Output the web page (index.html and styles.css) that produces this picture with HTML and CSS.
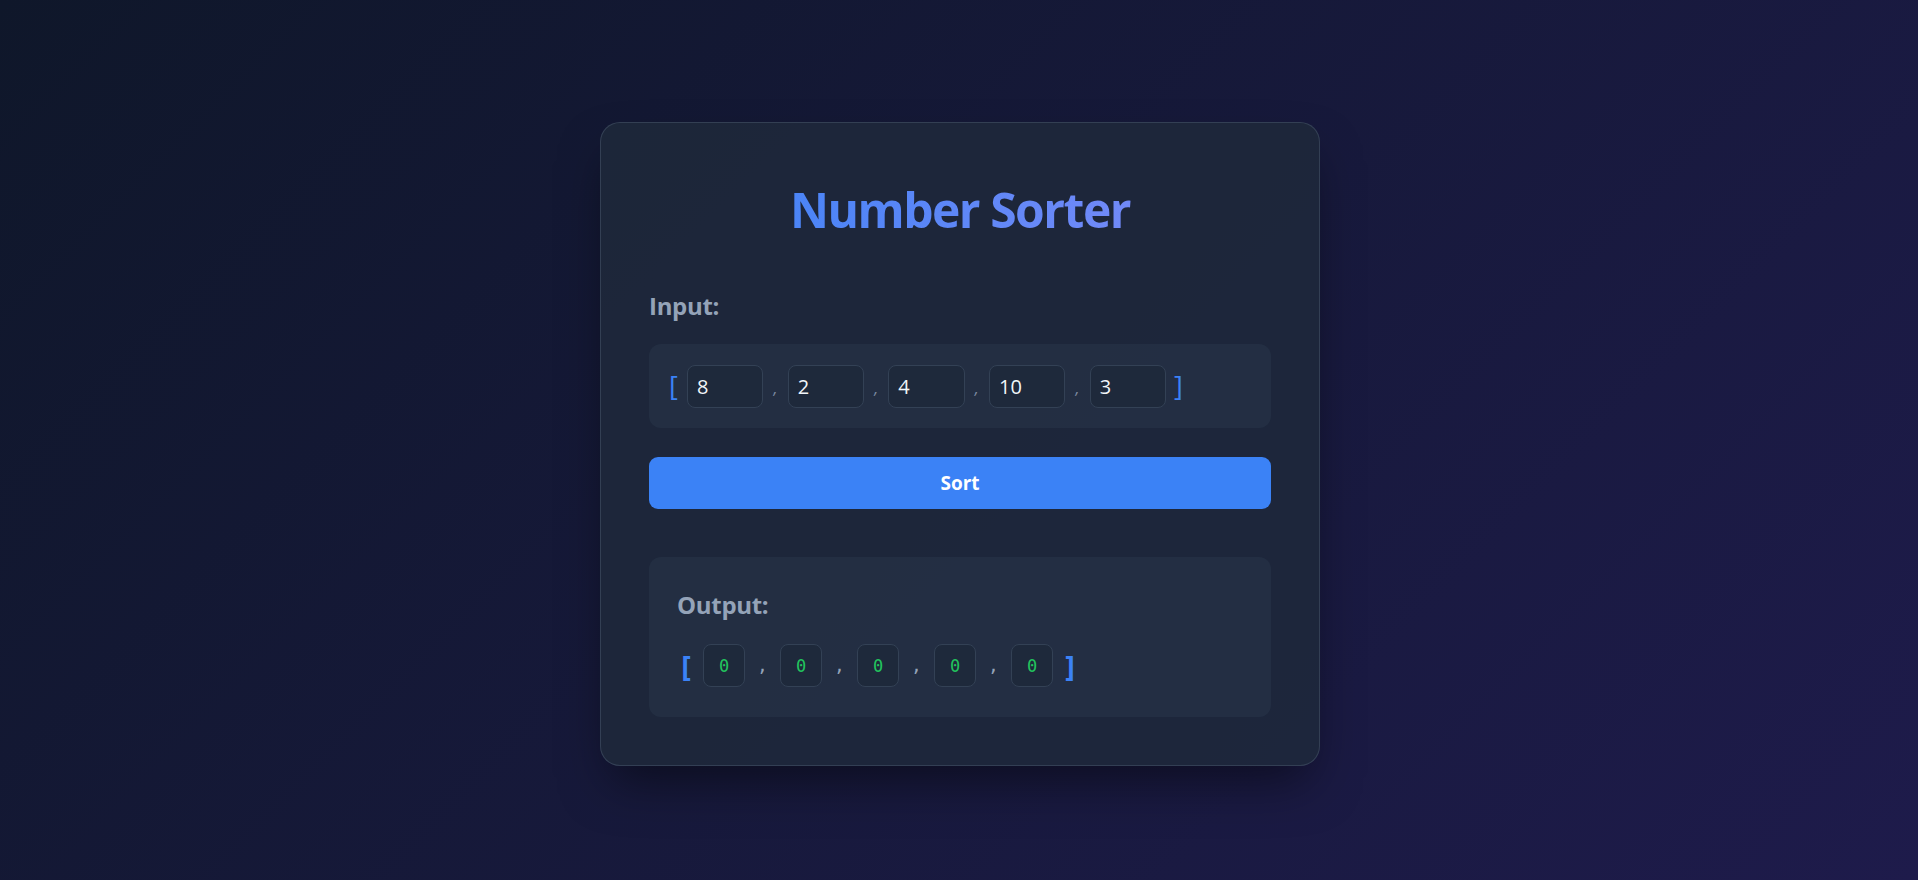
FILE: index.html
```html
<!DOCTYPE html>
<html lang="en">
<head>
<meta charset="utf-8">
<title>Number Sorter</title>
<link rel="stylesheet" href="styles.css">
</head>
<body>
  <main class="card">
    <h1 class="title">Number Sorter</h1>
    <div class="label">Input:</div>
    <div class="input-area">
      <div class="input-row">
        <span class="in-bracket">[</span>
        <input class="num-input" type="text" value="8">
        <span class="in-comma">,</span>
        <input class="num-input" type="text" value="2">
        <span class="in-comma">,</span>
        <input class="num-input" type="text" value="4">
        <span class="in-comma">,</span>
        <input class="num-input" type="text" value="10">
        <span class="in-comma">,</span>
        <input class="num-input" type="text" value="3">
        <span class="in-bracket">]</span>
      </div>
    </div>
    <button class="sort-btn" type="button">Sort</button>
    <section class="output-area">
      <div class="label out-label">Output:</div>
      <div class="output-row">
        <span class="out-bracket">[</span>
        <span class="out-box">0</span>
        <span class="out-comma">,</span>
        <span class="out-box">0</span>
        <span class="out-comma">,</span>
        <span class="out-box">0</span>
        <span class="out-comma">,</span>
        <span class="out-box">0</span>
        <span class="out-comma">,</span>
        <span class="out-box">0</span>
        <span class="out-bracket">]</span>
      </div>
    </section>
  </main>
</body>
</html>
```
FILE: styles.css
```css
* {
  box-sizing: border-box;
}

html, body {
  margin: 0;
  height: 100%;
}

body {
  min-height: 100vh;
  padding-top: 8px;
  padding-left: 2px;
  display: flex;
  justify-content: center;
  align-items: center;
  background: linear-gradient(135deg, #0f172a 0%, #1e1b4b 100%);
  font-family: "Open Sans", "Noto Sans", sans-serif;
  color: #e2e8f0;
}

.card {
  width: 720px;
  padding: 48px;
  border: 1px solid rgba(71, 85, 105, 0.55);
  border-radius: 20px;
  background: rgba(30, 41, 59, 0.85);
  box-shadow: 0 25px 50px -12px rgba(0, 0, 0, 0.5);
}

.title {
  margin: 7px 0 48px;
  font-size: 48px;
  line-height: 64px;
  font-weight: 700;
  letter-spacing: -1.5px;
  text-align: center;
  background: linear-gradient(90deg, #3b82f6, #818cf8);
  -webkit-background-clip: text;
  background-clip: text;
  color: transparent;
}

.label {
  font-size: 24px;
  line-height: 32px;
  font-weight: 700;
  letter-spacing: -0.3px;
  color: #94a3b8;
  margin-bottom: 22px;
}

.input-area {
  padding: 20px;
  border-radius: 12px;
  background: rgba(51, 65, 85, 0.3);
}

.input-row {
  display: flex;
  align-items: center;
  gap: 8px;
  height: 44px;
}

.in-bracket {
  width: 10px;
  font-size: 27px;
  line-height: 44px;
  color: #3b82f6;
}

.in-comma {
  width: 8.33px;
  font-size: 16px;
  font-style: italic;
  padding-top: 4px;
  color: #7c8aa0;
  text-align: center;
}

.num-input {
  width: 76.33px;
  height: 43px;
  padding: 0 9px;
  border: 1px solid #334155;
  border-radius: 8px;
  background: #1e293b;
  color: #f1f5f9;
  font-family: "Open Sans", "Noto Sans", sans-serif;
  font-size: 20px;
  outline: none;
}

.sort-btn {
  display: block;
  width: 100%;
  height: 52px;
  margin-top: 29px;
  border: none;
  border-radius: 9px;
  background: #3b82f6;
  color: #ffffff;
  font-family: "Open Sans", "Noto Sans", sans-serif;
  font-size: 19px;
  font-weight: 700;
  cursor: pointer;
}

.output-area {
  margin-top: 48px;
  padding: 30px 28px;
  border-radius: 12px;
  background: rgba(51, 65, 85, 0.3);
}

.out-label {
  line-height: 36px;
  margin-bottom: 21px;
}

.output-row {
  display: flex;
  align-items: center;
  gap: 8px;
  height: 43px;
}

.out-bracket {
  width: 18px;
  font-size: 29px;
  font-weight: 700;
  line-height: 43px;
  color: #3b82f6;
  text-align: center;
}

.out-comma {
  width: 19px;
  font-family: "DejaVu Sans Mono", monospace;
  font-size: 18px;
  color: #94a3b8;
  text-align: center;
}

.out-box {
  width: 42px;
  height: 43px;
  display: flex;
  align-items: center;
  justify-content: center;
  border: 1px solid #334155;
  border-radius: 8px;
  background: #1e293b;
  color: #22c55e;
  font-family: "DejaVu Sans Mono", monospace;
  font-size: 17px;
}
```
